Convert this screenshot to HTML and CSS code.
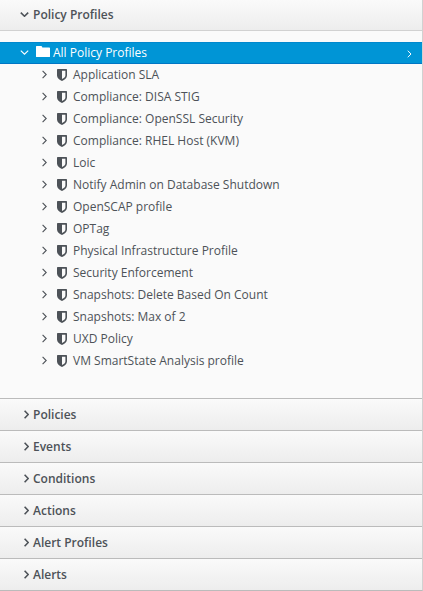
FILE: index.html
```html
<!DOCTYPE html>
<html lang="en">
<head>
<meta charset="utf-8">
<title>Policy Profiles</title>
<link rel="stylesheet" href="styles.css">
</head>
<body>
<svg class="defs" aria-hidden="true">
  <symbol id="right" viewBox="0 0 5 9"><path d="M.6.8L4.200 4.500.6 8.200"/></symbol>
  <symbol id="down" viewBox="0 0 9 5"><path d="M.8.6L4.500 4.200 8.200.6"/></symbol>
  <symbol id="shield" viewBox="0 0 10 12"><path fill-rule="evenodd" d="M.7 0h8.600q.7 0 .7.700v5.800c0 2.500-2.300 4.300-5 5.500C2.300 10.800 0 9 0 6.500V.7Q0 0 .7 0zM5 1.800v8.200c2-1 3.400-2.100 3.400-3.600V1.800z"/></symbol>
  <symbol id="folder" viewBox="0 0 14 11"><path d="M0 .6Q0 0 .6 0h4.600q.6 0 .8.600l.3.900h7q.7 0 .7.700v8.200q0 .6-.6.600H.6Q0 11 0 10.400z"/></symbol>
</svg>
<div class="accordion">
  <div class="heading open"><svg class="down"><use href="#down"/></svg>Policy Profiles</div>
  <div class="panel">
    <div class="row selected"><svg class="down"><use href="#down"/></svg><svg class="folder"><use href="#folder"/></svg><span>All Policy Profiles</span><svg class="more"><use href="#right"/></svg></div>
    <div class="row"><svg class="right"><use href="#right"/></svg><svg class="shield"><use href="#shield"/></svg>Application SLA</div>
    <div class="row"><svg class="right"><use href="#right"/></svg><svg class="shield"><use href="#shield"/></svg>Compliance: DISA STIG</div>
    <div class="row"><svg class="right"><use href="#right"/></svg><svg class="shield"><use href="#shield"/></svg>Compliance: OpenSSL Security</div>
    <div class="row"><svg class="right"><use href="#right"/></svg><svg class="shield"><use href="#shield"/></svg>Compliance: RHEL Host (KVM)</div>
    <div class="row"><svg class="right"><use href="#right"/></svg><svg class="shield"><use href="#shield"/></svg>Loic</div>
    <div class="row"><svg class="right"><use href="#right"/></svg><svg class="shield"><use href="#shield"/></svg>Notify Admin on Database Shutdown</div>
    <div class="row"><svg class="right"><use href="#right"/></svg><svg class="shield"><use href="#shield"/></svg>OpenSCAP profile</div>
    <div class="row"><svg class="right"><use href="#right"/></svg><svg class="shield"><use href="#shield"/></svg>OPTag</div>
    <div class="row"><svg class="right"><use href="#right"/></svg><svg class="shield"><use href="#shield"/></svg>Physical Infrastructure Profile</div>
    <div class="row"><svg class="right"><use href="#right"/></svg><svg class="shield"><use href="#shield"/></svg>Security Enforcement</div>
    <div class="row"><svg class="right"><use href="#right"/></svg><svg class="shield"><use href="#shield"/></svg>Snapshots: Delete Based On Count</div>
    <div class="row"><svg class="right"><use href="#right"/></svg><svg class="shield"><use href="#shield"/></svg>Snapshots: Max of 2</div>
    <div class="row"><svg class="right"><use href="#right"/></svg><svg class="shield"><use href="#shield"/></svg>UXD Policy</div>
    <div class="row"><svg class="right"><use href="#right"/></svg><svg class="shield"><use href="#shield"/></svg>VM SmartState Analysis profile</div>
  </div>
  <div class="heading"><svg class="right"><use href="#right"/></svg>Policies</div>
  <div class="heading"><svg class="right"><use href="#right"/></svg>Events</div>
  <div class="heading"><svg class="right"><use href="#right"/></svg>Conditions</div>
  <div class="heading"><svg class="right"><use href="#right"/></svg>Actions</div>
  <div class="heading"><svg class="right"><use href="#right"/></svg>Alert Profiles</div>
  <div class="heading"><svg class="right"><use href="#right"/></svg>Alerts</div>
</div>
</body>
</html>
```
FILE: styles.css
```css
* { box-sizing: border-box; }
body {
  margin: 0;
  overflow: hidden;
  background: #fafafa;
  color: #4d5258;
  font: 12px/20px "Open Sans", sans-serif;
}
.defs { position: absolute; width: 0; height: 0; }
svg { flex: none; fill: currentColor; }
.right, .down, .more { fill: none; stroke: currentColor; stroke-width: 1.1; }
.accordion {
  height: 591px;
  border-right: 1px solid #d1d1d1;
  border-bottom: 1px solid #bbb;
}
.heading {
  display: flex;
  align-items: center;
  height: 32px;
  padding-top: 1px;
  border-top: 1px solid #bbb;
  background: linear-gradient(#fafafa, #ededed);
  font-weight: 600;
}
.heading.open {
  height: 31px;
  padding: 0 0 1px;
  border-top: 0;
  border-bottom: 1px solid #d1d1d1;
}
.heading .right { width: 5px; height: 9px; margin: 0 4px 1px 24px; stroke-width: 1.6; }
.heading .down { width: 9px; height: 5px; margin: 0 4px 0 20px; stroke-width: 1.6; }
.panel { height: 367px; padding-top: 11px; }
.row { display: flex; align-items: center; height: 22px; }
.row .right { width: 5px; height: 9px; margin: 0 10px 1px 42px; }
.shield { width: 10px; height: 12px; margin-right: 6px; }
.selected {
  border-top: 1px solid #0088ce;
  border-bottom: 1px solid #0076c4;
  background: #0095d6;
  color: #fff;
}
.selected .down { width: 9px; height: 5px; margin: 0 7px 1px 20px; }
.folder { width: 14px; height: 11px; margin: 0 3px 3px 0; }
.selected .more { width: 5px; height: 8px; margin: 2px 10px 0 auto; }
```
